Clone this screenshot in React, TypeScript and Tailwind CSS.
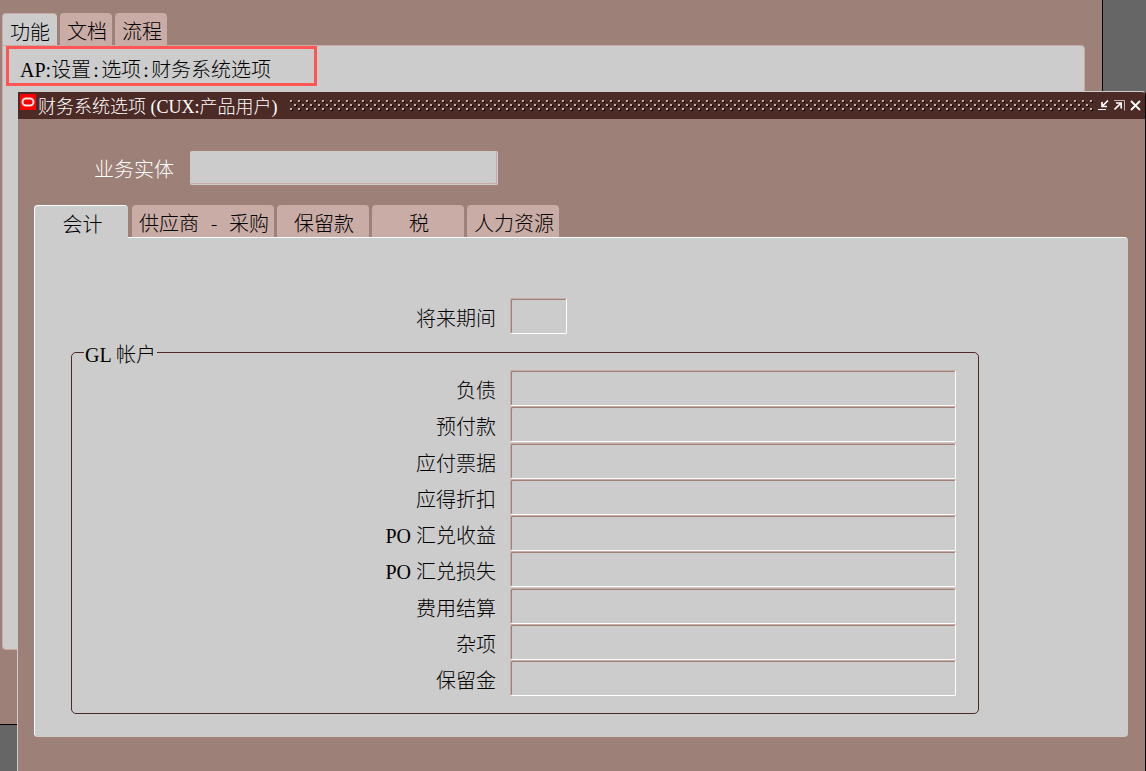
import { ReactNode, useState } from "react";

const menuTabs = ["功能", "文档", "流程"];

const optionTabs = [
  { name: "会计", style: "w-[94px]" },
  { name: "供应商", suffix: "-", rest: "采购", style: "w-[142px]" },
  { name: "保留款", style: "w-[92px]" },
  { name: "税", style: "w-[92px]" },
  { name: "人力资源", style: "w-[92px]" },
];

const accounts = [
  { id: "liability", name: "负债" },
  { id: "prepayment", name: "预付款" },
  { id: "bills", name: "应付票据" },
  { id: "discount", name: "应得折扣" },
  { id: "gain", prefix: "PO ", name: "汇兑收益" },
  { id: "loss", prefix: "PO ", name: "汇兑损失" },
  { id: "expense", name: "费用结算" },
  { id: "misc", name: "杂项" },
  { id: "retainage", name: "保留金" },
];

function Latin({ children }: { children: ReactNode }) {
  return (
    <span className="font-['Liberation_Serif',serif] leading-none whitespace-pre">
      {children}
    </span>
  );
}

function Colon() {
  return (
    <span className="inline-block w-[10px] text-center font-['Liberation_Serif',serif] leading-none">
      :
    </span>
  );
}

const inputStyle =
  "h-9 rounded-[2px] border border-t-[#c9aca5] border-l-[#c9aca5] border-r-white border-b-white bg-[#cccccc] px-2 text-black shadow-[inset_1px_1px_0_#9e8077] outline-none";

function Navigator() {
  const [active, setActive] = useState("功能");

  return (
    <div className="absolute top-0 left-0 right-[43px] h-[725px] border-r border-b border-black bg-[#9d8077] pt-[13px] pl-[2px] pr-[17px]">
      <div className="flex gap-[3px]">
        {menuTabs.map((tab) => (
          <button
            key={tab}
            onClick={() => setActive(tab)}
            className={
              active === tab
                ? "h-8 w-[55px] rounded-t-[4px] border-t border-l border-[#c9aca5] bg-[#cccccc] pt-1"
                : "h-8 w-[52px] rounded-t-[4px] bg-[#c9aca5] pt-1 pl-[2px]"
            }
          >
            {tab}
          </button>
        ))}
      </div>
      <div className="h-[605px] rounded-r-[4px] rounded-bl-[4px] border border-[#c9aca5] bg-[#cccccc]">
        <div className="ml-[3px] flex h-10 w-[311px] items-center border-[3px] border-[#ff5555] pt-[6px] pl-[11px]">
          <p>
            <Latin>AP:</Latin>设置
            <Colon />
            选项
            <Colon />
            财务系统选项
          </p>
        </div>
      </div>
    </div>
  );
}

function TitleBar() {
  return (
    <div className="flex h-[27px] rounded-tr-[4px] bg-[#4c2a26] pl-[2px] text-white">
      <svg width="16" height="16" className="mt-[2px] shrink-0">
        <rect width="16" height="16" fill="#ff0000" />
        <rect
          x="2.5"
          y="4.5"
          width="11"
          height="7"
          rx="3.5"
          fill="none"
          stroke="#ffe4e0"
          strokeWidth="2"
        />
      </svg>
      <h1 className="ml-[2px] w-[244px] shrink-0 pt-px text-[18px] leading-6 whitespace-pre">
        财务系统选项<Latin>{" (CUX:"}</Latin>产品用户<Latin>)</Latin>
      </h1>
      <svg height="12" className="mt-2 ml-2 min-w-0 flex-1">
        <defs>
          <pattern id="grip" width="8" height="8" patternUnits="userSpaceOnUse">
            <rect x="1" y="1" width="2" height="2" fill="#000000" />
            <rect width="2" height="2" fill="#c9aca5" />
            <rect x="5" y="5" width="2" height="2" fill="#000000" />
            <rect x="4" y="4" width="2" height="2" fill="#c9aca5" />
          </pattern>
        </defs>
        <rect width="100%" height="12" fill="url(#grip)" />
      </svg>
      <div className="mt-2 mr-1 ml-[5px] flex items-start gap-[5px]">
        <button aria-label="Minimize">
          <svg width="11" height="11" fill="none" className="block">
            <path d="M0 9.5H8" stroke="#ffffff" />
            <path d="M10 .5L4.5 6M4 2V6.5H9" stroke="#ffffff" strokeWidth="1.7" />
          </svg>
        </button>
        <button aria-label="Restore">
          <svg width="11" height="11" fill="none" className="block">
            <path d="M0 .5H10.5V10.5" stroke="#c9b8b4" />
            <path d="M.5 9.5L6.5 3.5M2 3H7.2V8.5" stroke="#ffffff" strokeWidth="1.7" />
          </svg>
        </button>
        <button aria-label="Close">
          <svg width="11" height="11" fill="none" className="block">
            <path d="M1 1L10 10M10 1L1 10" stroke="#ffffff" strokeWidth="1.8" />
          </svg>
        </button>
      </div>
    </div>
  );
}

function OptionTabs() {
  const [active, setActive] = useState("会计");

  return (
    <div className="mt-5 flex h-8">
      {optionTabs.map((tab) => (
        <div
          key={tab.name}
          className={active === tab.name ? "z-10 -mb-px pr-1" : "pr-[3px]"}
        >
          <button
            onClick={() => setActive(tab.name)}
            className={`pt-1 pl-[2px] ${tab.style} ${
              active === tab.name
                ? "h-[33px] rounded-t-[4px] border-t border-l border-white bg-[#cccccc]"
                : "h-8 rounded-t-[4px] bg-[#c9aca5]"
            }`}
          >
            {tab.name}
            {tab.suffix && (
              <span className="inline-block w-[30px] text-center leading-none">
                {tab.suffix}
              </span>
            )}
            {tab.rest}
          </button>
        </div>
      ))}
    </div>
  );
}

function Accounts() {
  return (
    <div className="h-[500px] rounded-r-[4px] rounded-bl-[4px] border-t border-l border-white bg-[#cccccc] pt-[60px]">
      <div className="flex items-center">
        <label htmlFor="period" className="w-[461px] pt-1 text-right">
          将来期间
        </label>
        <input id="period" className={`ml-[14px] w-[57px] ${inputStyle}`} />
      </div>
      <fieldset className="mt-2 mr-[149px] ml-9 h-[372px] rounded-[5px] border border-[#4c2a26] pr-[22px] pl-0">
        <legend className="ml-3 h-5 px-[1px] leading-6">
          <Latin>GL </Latin>帐户
        </legend>
        <div className="mt-2 flex h-[326px] flex-col justify-between">
          {accounts.map((account) => (
            <div key={account.id} className="flex items-center">
              <label
                htmlFor={account.id}
                className="w-[424px] shrink-0 pt-1 text-right"
              >
                {account.prefix && <Latin>{account.prefix}</Latin>}
                {account.name}
              </label>
              <input
                id={account.id}
                className={`ml-[14px] min-w-0 flex-1 ${inputStyle}`}
              />
            </div>
          ))}
        </div>
      </fieldset>
    </div>
  );
}

export default function App() {
  return (
    <div className="relative flex min-h-screen flex-col overflow-hidden bg-[#666666] pt-[91px] pl-[17px] font-['Noto_Sans_CJK_SC',sans-serif] text-[20px] leading-7 font-light text-black">
      <Navigator />
      <div className="relative flex-1 rounded-t-[4px] border-t border-l border-r border-t-[#cccccc] border-l-[#cccccc] border-r-black bg-[#9d8077]">
        <TitleBar />
        <main className="pr-[17px] pb-[33px] pl-4">
          <div className="mt-8 flex items-center">
            <label
              htmlFor="entity"
              className="w-[140px] pt-[2px] text-right text-white"
            >
              业务实体
            </label>
            <input
              id="entity"
              className="ml-4 h-[34px] w-[308px] rounded-[2px] border-r border-b border-[#cccccc] bg-[#cccccc] px-2 text-black shadow-[inset_-1px_-1px_0_#c9aca5] outline-none"
            />
          </div>
          <OptionTabs />
          <Accounts />
        </main>
      </div>
    </div>
  );
}
